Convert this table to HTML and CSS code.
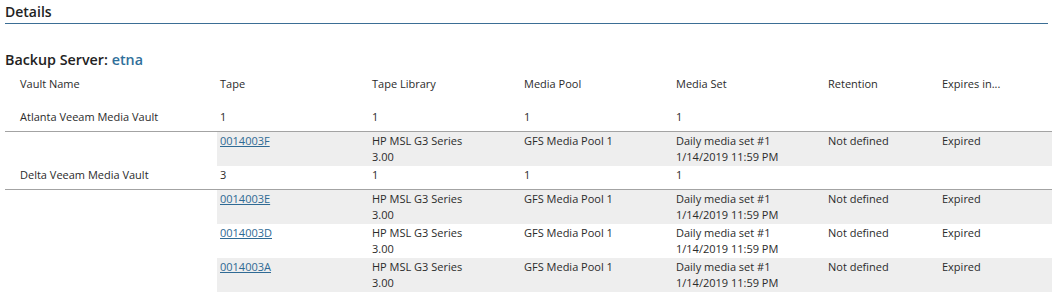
FILE: index.html
```html
<!DOCTYPE html>
<html>
<head>
<meta charset="utf-8">
<link rel="stylesheet" href="styles.css">
</head>
<body>
<div class="section-title">Details</div>
<div class="server-title">Backup Server: <span class="server-name">etna</span></div>
<table class="vault-table">
  <colgroup>
    <col class="c-vault"><col class="c-wide"><col class="c-wide"><col class="c-wide"><col class="c-wide"><col class="c-ret"><col class="c-exp">
  </colgroup>
  <thead>
    <tr class="head-row">
      <th class="first">Vault Name</th><th>Tape</th><th>Tape Library</th><th>Media Pool</th><th>Media Set</th><th>Retention</th><th>Expires in...</th>
    </tr>
  </thead>
  <tbody>
    <tr class="vault-row">
      <td class="first">Atlanta Veeam Media Vault</td><td>1</td><td>1</td><td>1</td><td>1</td><td></td><td></td>
    </tr>
    <tr class="tape-row alt">
      <td class="blank"></td><td><a href="#">0014003F</a></td><td>HP MSL G3 Series<br>3.00</td><td>GFS Media Pool 1</td><td>Daily media set #1<br>1/14/2019 11:59 PM</td><td>Not defined</td><td>Expired</td>
    </tr>
    <tr class="vault-row">
      <td class="first">Delta Veeam Media Vault</td><td>3</td><td>1</td><td>1</td><td>1</td><td></td><td></td>
    </tr>
    <tr class="tape-row alt">
      <td class="blank"></td><td><a href="#">0014003E</a></td><td>HP MSL G3 Series<br>3.00</td><td>GFS Media Pool 1</td><td>Daily media set #1<br>1/14/2019 11:59 PM</td><td>Not defined</td><td>Expired</td>
    </tr>
    <tr class="tape-row">
      <td class="blank"></td><td><a href="#">0014003D</a></td><td>HP MSL G3 Series<br>3.00</td><td>GFS Media Pool 1</td><td>Daily media set #1<br>1/14/2019 11:59 PM</td><td>Not defined</td><td>Expired</td>
    </tr>
    <tr class="tape-row alt">
      <td class="blank"></td><td><a href="#">0014003A</a></td><td>HP MSL G3 Series<br>3.00</td><td>GFS Media Pool 1</td><td>Daily media set #1<br>1/14/2019 11:59 PM</td><td>Not defined</td><td>Expired</td>
    </tr>
  </tbody>
</table>
</body>
</html>
```
FILE: styles.css
```css
html, body {
  margin: 0;
  padding: 0;
  background: #ffffff;
}
body {
  font-family: "Open Sans", "Noto Sans", sans-serif;
  color: #2b2b2b;
  font-size: 11px;
}
.section-title {
  margin: 0 8px 0 5px;
  padding: 2px 0 2px 0;
  font-size: 14px;
  line-height: 19px;
  font-weight: 600;
  color: #222222;
  border-bottom: 1px solid #3b6e95;
}
.server-title {
  margin: 26px 0 0 5px;
  font-size: 14.3px;
  line-height: 20px;
  font-weight: 600;
  color: #222222;
}
.server-name {
  color: #2f6f9a;
}
.vault-table {
  margin-left: 5px;
  width: 1047px;
  border-collapse: collapse;
  table-layout: fixed;
}
.c-vault { width: 212px; }
.c-wide { width: 152px; }
.c-ret { width: 114px; }
.c-exp { width: 113px; }
.vault-table th,
.vault-table td {
  text-align: left;
  vertical-align: top;
  font-weight: 400;
  line-height: 16px;
  padding: 0 0 0 3px;
  white-space: nowrap;
}
.vault-table .first {
  padding-left: 15px;
}
.head-row th {
  padding-top: 6px;
  padding-bottom: 16px;
}
.vault-row td {
  padding-top: 1px;
  padding-bottom: 6px;
  border-bottom: 1px solid #a3a3a3;
}
.tape-row td {
  padding-top: 1px;
  padding-bottom: 1px;
}
.tape-row.alt td {
  background: #eeeeee;
}
.tape-row.alt td.blank {
  background: transparent;
}
.vault-table a {
  color: #2f6a94;
  text-decoration: underline;
}
```
